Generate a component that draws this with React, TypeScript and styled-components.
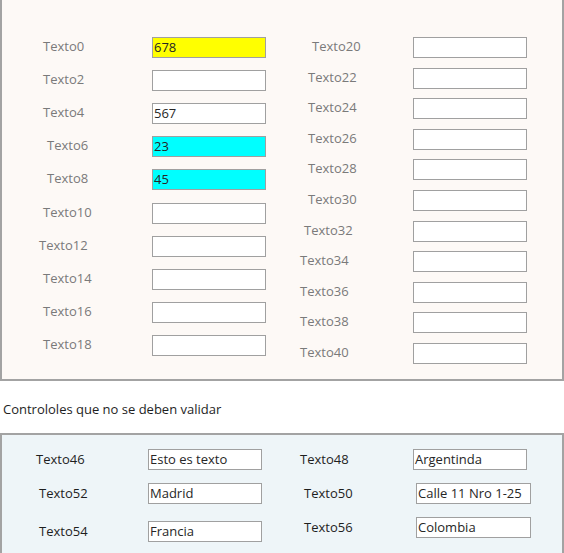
import React from "react";
import styled, { createGlobalStyle } from "styled-components";

const Global = createGlobalStyle`
  html, body { margin: 0; padding: 0; background: #ffffff; }
  body { font-family: "Open Sans", "Liberation Sans", sans-serif; font-size: 13px; }
  * { box-sizing: border-box; }
`;

const Page = styled.div`
  width: 564px;
  height: 553px;
  overflow: hidden;
  display: flex;
  flex-direction: column;
`;

const Panel = styled.section<{ $bg: string; $h: number; $pt: number; $top?: boolean }>`
  height: ${(p) => p.$h}px;
  flex-shrink: 0;
  background: ${(p) => p.$bg};
  border-left: 2px solid #a3a3a3;
  border-right: 2px solid #a3a3a3;
  border-bottom: ${(p) => (p.$top ? "none" : "2px solid #a3a3a3")};
  border-top: ${(p) => (p.$top ? "2px solid #a3a3a3" : "none")};
  padding-top: ${(p) => p.$pt}px;
  display: flex;
`;

const Column = styled.div<{ $w?: number; $gap: number }>`
  width: ${(p) => (p.$w ? `${p.$w}px` : "auto")};
  flex-shrink: 0;
  display: flex;
  flex-direction: column;
  gap: ${(p) => p.$gap}px;
`;

const Row = styled.div<{ $mt?: number }>`
  display: flex;
  align-items: center;
  height: 21px;
  margin-top: ${(p) => p.$mt ?? 0}px;
`;

const LabelCell = styled.div<{ $w: number; $indent: number; $dark?: boolean; $lift?: number }>`
  width: ${(p) => p.$w}px;
  flex-shrink: 0;
  padding-left: ${(p) => p.$indent}px;
  padding-bottom: ${(p) => p.$lift ?? 0}px;
  font-size: 13px;
  line-height: 18px;
  color: ${(p) => (p.$dark ? "#1e1e1e" : "#7a7a7a")};
  white-space: nowrap;
`;

const Field = styled.div<{ $fill?: string; $w?: number; $shift?: number }>`
  width: ${(p) => p.$w ?? 114}px;
  height: 21px;
  margin-left: ${(p) => p.$shift ?? 0}px;
  flex-shrink: 0;
  background: ${(p) => p.$fill ?? "#ffffff"};
  border: 1px solid #a0a0a0;
  padding: 0 0 0 1px;
  font-size: 13px;
  line-height: 19px;
  color: #262626;
  white-space: nowrap;
  overflow: hidden;
`;

const Caption = styled.div`
  height: 52px;
  flex-shrink: 0;
  padding: 4px 0 0 3px;
  display: flex;
  align-items: center;
  font-size: 13px;
  color: #1e1e1e;
`;

type Item = { label: string; indent: number; value?: string; fill?: string; w?: number; shift?: number; mt?: number };

const leftTop: Item[] = [
  { label: "Texto0", indent: 41, value: "678", fill: "#ffff00" },
  { label: "Texto2", indent: 41 },
  { label: "Texto4", indent: 41, value: "567" },
  { label: "Texto6", indent: 45, value: "23", fill: "#00ffff" },
  { label: "Texto8", indent: 45, value: "45", fill: "#00ffff" },
  { label: "Texto10", indent: 41, mt: 1 },
  { label: "Texto12", indent: 37 },
  { label: "Texto14", indent: 41 },
  { label: "Texto16", indent: 41 },
  { label: "Texto18", indent: 41 },
];

const rightTop: Item[] = [
  { label: "Texto20", indent: 30 },
  { label: "Texto22", indent: 26 },
  { label: "Texto24", indent: 26 },
  { label: "Texto26", indent: 26 },
  { label: "Texto28", indent: 26 },
  { label: "Texto30", indent: 26 },
  { label: "Texto32", indent: 22 },
  { label: "Texto34", indent: 18 },
  { label: "Texto36", indent: 18 },
  { label: "Texto38", indent: 18 },
  { label: "Texto40", indent: 18 },
];

const leftBottom: Item[] = [
  { label: "Texto46", indent: 34, value: "Esto es texto" },
  { label: "Texto52", indent: 37, value: "Madrid", mt: 13 },
  { label: "Texto54", indent: 37, value: "Francia", mt: 17 },
];

const rightBottom: Item[] = [
  { label: "Texto48", indent: 18, value: "Argentinda" },
  { label: "Texto50", indent: 22, value: "Calle 11 Nro 1-25", w: 115, shift: 3, mt: 13 },
  { label: "Texto56", indent: 22, value: "Colombia", w: 115, shift: 3, mt: 13 },
];

const Rows: React.FC<{ items: Item[]; labelW: number; dark?: boolean; lift?: number }> = ({ items, labelW, dark, lift }) => (
  <>
    {items.map((it) => (
      <Row key={it.label} $mt={it.mt}>
        <LabelCell $w={labelW} $indent={it.indent} $dark={dark} $lift={lift}>
          {it.label}
        </LabelCell>
        <Field $fill={it.fill} $w={it.w} $shift={it.shift}>
          {it.value ?? ""}
        </Field>
      </Row>
    ))}
  </>
);

export default function App() {
  return (
    <Page>
      <Global />
      <Panel $bg="#fdf9f6" $h={381} $pt={37}>
        <Column $w={280} $gap={12}>
          <Rows items={leftTop} labelW={150} lift={3} />
        </Column>
        <Column $gap={9.6}>
          <Rows items={rightTop} labelW={131} lift={3} />
        </Column>
      </Panel>
      <Caption>Controloles que no se deben validar</Caption>
      <Panel $bg="#eef5f8" $h={140} $pt={14} $top>
        <Column $w={280} $gap={0}>
          <Rows items={leftBottom} labelW={146} dark lift={1} />
        </Column>
        <Column $gap={0}>
          <Rows items={rightBottom} labelW={131} dark lift={1} />
        </Column>
      </Panel>
    </Page>
  );
}
